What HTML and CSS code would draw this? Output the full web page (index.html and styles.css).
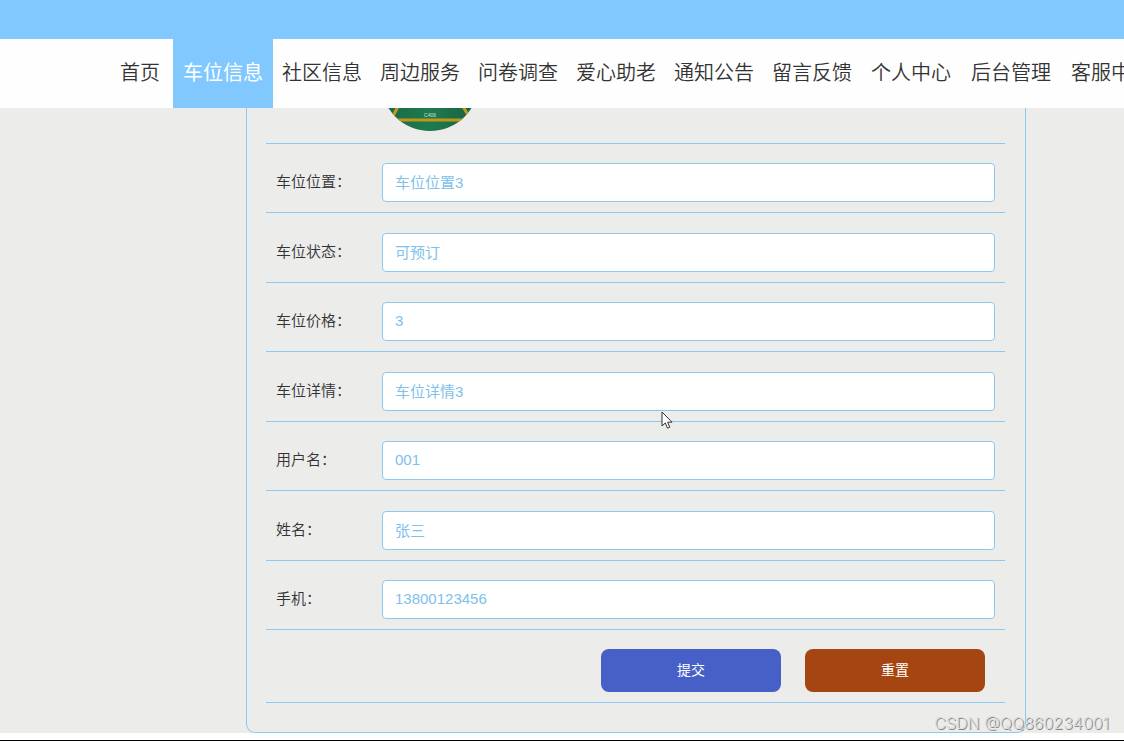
FILE: index.html
```html
<!DOCTYPE html>
<html lang="zh-CN">
<head>
<meta charset="utf-8">
<title>车位信息</title>
<link rel="stylesheet" href="styles.css">
</head>
<body>
<header class="header">
  <div class="topbar"></div>
  <nav class="nav">
    <a class="nav-link home" href="#">首页</a>
    <a class="nav-link active" href="#">车位信息</a>
    <a class="nav-link" href="#">社区信息</a>
    <a class="nav-link" href="#">周边服务</a>
    <a class="nav-link" href="#">问卷调查</a>
    <a class="nav-link" href="#">爱心助老</a>
    <a class="nav-link" href="#">通知公告</a>
    <a class="nav-link" href="#">留言反馈</a>
    <div class="nav-tools">
      <a class="nav-link" href="#">个人中心</a>
      <a class="nav-link" href="#">后台管理</a>
      <a class="nav-link" href="#">客服中心</a>
    </div>
  </nav>
</header>
<main class="main">
  <form class="panel">
    <div class="photo-row">
      <svg class="photo" viewBox="0 0 98 98" role="img" aria-label="车位图片">
        <defs>
          <clipPath id="round"><circle cx="49" cy="49" r="49"/></clipPath>
          <linearGradient id="floor" x1="0" x2="1"><stop offset="0" stop-color="#196846"/><stop offset=".5" stop-color="#1f7a50"/><stop offset="1" stop-color="#17603e"/></linearGradient>
        </defs>
        <g clip-path="url(#round)">
          <rect width="98" height="98" fill="url(#floor)"/>
          <path d="M24 60 10 87M74 60 90 87" fill="none" stroke="#c09a24" stroke-width="3"/>
          <path d="M8 87H90" stroke="#bd961a" stroke-width="3"/>
          <text class="photo-text" x="49" y="84" text-anchor="middle">C406</text>
        </g>
      </svg>
    </div>
    <div class="row"><label class="label" for="place">车位位置：</label><input class="input" id="place" value="车位位置3"></div>
    <div class="row"><label class="label" for="state">车位状态：</label><input class="input" id="state" value="可预订"></div>
    <div class="row"><label class="label" for="price">车位价格：</label><input class="input" id="price" value="3"></div>
    <div class="row"><label class="label" for="detail">车位详情：</label><input class="input" id="detail" value="车位详情3"></div>
    <div class="row"><label class="label" for="user">用户名：</label><input class="input" id="user" value="001"></div>
    <div class="row"><label class="label" for="name">姓名：</label><input class="input" id="name" value="张三"></div>
    <div class="row"><label class="label" for="phone">手机：</label><input class="input" id="phone" type="tel" value="13800123456"></div>
    <div class="actions">
      <button class="button submit" type="submit">提交</button>
      <button class="button reset" type="reset">重置</button>
    </div>
  </form>
</main>
<footer class="footer"></footer>
<div class="watermark">CSDN @QQ860234001</div>
<svg class="cursor" viewBox="0 0 12 19" aria-hidden="true"><path d="M1 1V15L4.3 12 6.5 17.2 8.8 16.2 6.6 11.2H11Z" fill="#fff" stroke="#333" stroke-width="1"/></svg>
</body>
</html>
```
FILE: styles.css
```css
* {
  box-sizing: border-box;
}

body {
  margin: 0;
  background: #fff;
  color: #333;
  font-family: "Liberation Sans", "Noto Sans CJK SC", sans-serif;
  font-size: 15px;
  overflow-x: hidden;
}

.header {
  position: fixed;
  top: 0;
  left: 0;
  right: 0;
  z-index: 1;
  overflow: hidden;
  background: #fefefe;
}

.topbar {
  height: 39px;
  background: #80c8fd;
}

.nav {
  display: flex;
  padding-left: 111px;
}

.nav-link {
  flex: none;
  padding: 0 9px;
  color: #333;
  font-size: 20px;
  font-weight: 350;
  line-height: 69px;
  text-decoration: none;
  white-space: nowrap;
}

.home {
  margin-right: 4px;
}

.active {
  padding: 0 10px;
  background: #80c8fd;
  color: #fff;
  font-weight: 400;
}

.nav-tools {
  display: flex;
}

.nav-tools .nav-link {
  padding: 0 10px;
}

.main {
  padding: 0 98px 0 246px;
  background: #ececeb;
}

.panel {
  padding: 0 20px 29px 19px;
  border: 1px solid #8ec8f0;
  border-top: 0;
  border-radius: 0 0 9px 9px;
}

.photo-row {
  display: flex;
  padding: 33px 10px 12px 115px;
  border-bottom: 1px solid #8ec8f0;
}

.photo {
  width: 98px;
  height: 98px;
}

.photo-text {
  fill: #c9e2d2;
  font-size: 5px;
}

.row {
  display: flex;
  align-items: flex-start;
  padding: 19px 10px 10px;
  border-bottom: 1px solid #8ec8f0;
}

.row:nth-child(odd) {
  padding-top: 20px;
}

.label {
  flex: none;
  width: 106px;
  font-weight: 350;
  line-height: 37px;
}

.input {
  flex: 1;
  min-width: 0;
  height: 39px;
  padding: 0 12px 2px;
  border: 1px solid #8ec8f0;
  border-radius: 4px;
  background: #fefffe;
  color: #80c1ec;
  font: inherit;
  outline: 0;
}

.actions {
  display: flex;
  justify-content: flex-end;
  gap: 24px;
  padding: 19px 20px 10px;
  border-bottom: 1px solid #8ec8f0;
}

.button {
  width: 180px;
  height: 43px;
  padding: 0 0 3px;
  border: 0;
  border-radius: 8px;
  color: #fff;
  font: inherit;
  font-size: 14px;
}

.submit {
  background: #4760c7;
}

.reset {
  background: #a54612;
}

.footer {
  height: 8px;
  border-bottom: 1px solid #000;
}

.watermark {
  position: absolute;
  right: 15px;
  top: 713px;
  color: #dcdcdc;
  font-family: Inter, sans-serif;
  font-size: 16px;
  font-weight: 300;
  line-height: 20px;
  text-shadow: 1px 1px 0 #888;
}

.cursor {
  position: absolute;
  left: 661px;
  top: 411px;
  width: 12px;
  height: 19px;
}
```
